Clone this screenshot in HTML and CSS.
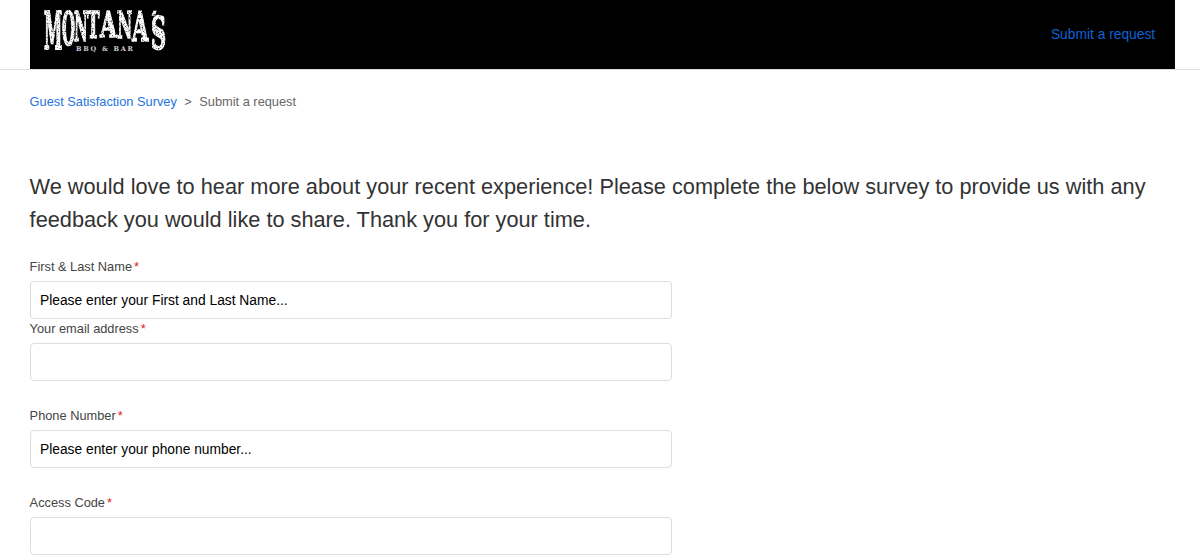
FILE: index.html
```html
<!DOCTYPE html>
<html lang="en">
<head>
<meta charset="utf-8">
<title>Submit a request</title>
<link rel="stylesheet" href="styles.css">
</head>
<body>
<header class="site-header">
  <div class="header-inner">
    <a class="logo" href="#" aria-label="Montana's BBQ &amp; Bar">
      <svg class="logo-svg" width="124" height="44" viewBox="0 0 124 44">
        <defs>
          <filter id="distress" x="0" y="0" width="100%" height="100%">
            <feTurbulence type="fractalNoise" baseFrequency="0.7" numOctaves="2" seed="4" result="n"/>
            <feColorMatrix in="n" type="matrix" values="0 0 0 0 0  0 0 0 0 0  0 0 0 0 0  0 0 0 -3 2.6" result="m"/>
            <feComposite in="SourceGraphic" in2="m" operator="in" result="c"/>
            <feGaussianBlur in="c" stdDeviation="0.3"/>
          </filter>
        </defs>
        <g class="logo-letters" filter="url(#distress)">
          <text transform="translate(0 39) scale(.55 1.74)">M</text>
          <text transform="translate(18 35) scale(.5 1.56)">O</text>
          <text transform="translate(30 31) scale(.5 1.38)">N</text>
          <text transform="translate(43 28) scale(.56 1.24)">T</text>
          <text transform="translate(56 27) scale(.72 1.2)">A</text>
          <text transform="translate(73 28) scale(.56 1.24)">N</text>
          <text transform="translate(88 31) scale(.7 1.38)">A</text>
          <text transform="translate(103 12) skewX(-24) scale(.7 .5)">'</text>
          <text transform="translate(107 39) scale(.7 1.5)">S</text>
        </g>
        <text class="logo-sub" x="32" y="41" textLength="57" lengthAdjust="spacing">BBQ &amp; BAR</text>
      </svg>
    </a>
    <a class="nav-link" href="#">Submit a request</a>
  </div>
</header>
<main class="page">
  <nav class="breadcrumbs">
    <a href="#">Guest Satisfaction Survey</a>
    <span class="sep">&gt;</span>
    <span class="current">Submit a request</span>
  </nav>
  <h1 class="intro">We would love to hear more about your recent experience! Please complete the below survey to provide us with any feedback you would like to share. Thank you for your time.</h1>
  <form class="form">
    <div class="field field-first">
      <label class="label">First &amp; Last Name<span class="req">*</span></label>
      <input class="input" type="text" placeholder="Please enter your First and Last Name...">
    </div>
    <div class="field">
      <label class="label">Your email address<span class="req">*</span></label>
      <input class="input" type="text">
    </div>
    <div class="field">
      <label class="label">Phone Number<span class="req">*</span></label>
      <input class="input" type="text" placeholder="Please enter your phone number...">
    </div>
    <div class="field">
      <label class="label">Access Code<span class="req">*</span></label>
      <input class="input" type="text">
    </div>
  </form>
</main>
</body>
</html>
```
FILE: styles.css
```css
* { box-sizing: border-box; }
html, body { margin: 0; padding: 0; background: #fff; }
body { font-family: "Liberation Sans", Arial, sans-serif; color: #333; }

.site-header { height: 70px; border-bottom: 1px solid #ddd; }
.header-inner {
  width: 1145.6px; height: 69px; margin-left: 29.6px; background: #000;
  display: flex; align-items: center; justify-content: space-between;
  padding: 0 20px 1px 14.4px;
}
.logo { display: block; height: 69px; padding-top: 10px; align-self: flex-start; }
.logo-svg { display: block; }
.logo-letters { font-family: "DejaVu Serif", serif; font-weight: 700; font-size: 30px; fill: #fff; stroke: #fff; stroke-width: 1.1px; }
.logo-sub { font-family: "DejaVu Serif", serif; font-weight: 700; font-size: 6.5px; fill: #ccc; }
.nav-link { font-size: 13.8px; color: #0f62d9; text-decoration: none; }

.page { width: 1140px; margin-left: 29.6px; }
.breadcrumbs { margin-top: 24px; font-size: 12.8px; line-height: 15px; color: #666; display: flex; gap: 7.5px; }
.breadcrumbs a { color: #1f73e0; text-decoration: none; }
.intro { margin: 62px 0 0; font-size: 21.74px; font-weight: 400; line-height: 32.5px; color: #333; }

.form { width: 642.4px; margin-top: 21px; }
.field { margin-top: 25px; }
.field-first, .field:nth-child(2) { margin-top: 0; }
.label { display: block; font-size: 12.8px; line-height: 19px; margin-bottom: 5px; color: #444; }
.req { color: #e02020; margin-left: 2px; }
.input {
  display: block; width: 100%; height: 38px; padding: 0 9.4px;
  border: 1px solid #ddd; border-radius: 4px; background: #fff;
  font-family: inherit; font-size: 13.8px; color: #000; outline: none;
}
.input::placeholder { color: #000; opacity: 1; }
```
